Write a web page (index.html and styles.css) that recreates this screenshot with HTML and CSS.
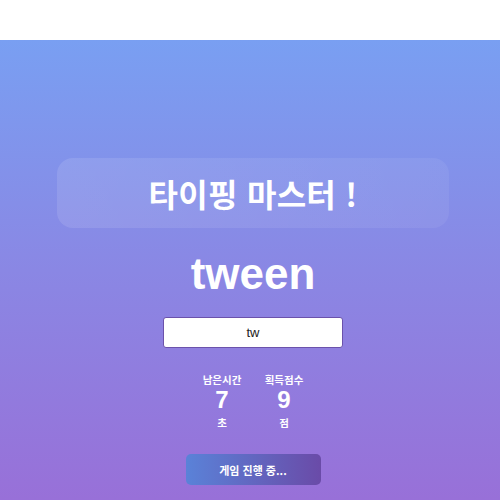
FILE: index.html
```html
<!DOCTYPE html>
<html lang="ko">
<head>
<meta charset="utf-8">
<link rel="stylesheet" href="styles.css">
</head>
<body>
<div class="topbar"></div>
<main class="stage">
  <div class="title-box"><h1 class="title">타이핑 마스터 !</h1></div>
  <div class="word">tween</div>
  <div class="input-box">tw</div>
  <div class="stats">
    <div class="stat">
      <div class="stat-label">남은시간</div>
      <div class="stat-value">7</div>
      <div class="stat-unit">초</div>
    </div>
    <div class="stat">
      <div class="stat-label">획득점수</div>
      <div class="stat-value">9</div>
      <div class="stat-unit">점</div>
    </div>
  </div>
  <button class="play-btn">게임 진행 중...</button>
</main>
</body>
</html>
```
FILE: styles.css
```css
html, body {
  margin: 0;
  padding: 0;
  height: 100%;
  background: #fff;
}
body {
  font-family: "Noto Sans CJK KR", "Liberation Sans", sans-serif;
  overflow: hidden;
}
.topbar {
  height: 40px;
  background: #fff;
}
.stage {
  height: 460px;
  background: linear-gradient(180deg, #799ff2 0%, #8a87e4 50%, #9870d8 100%);
  display: flex;
  flex-direction: column;
  align-items: center;
  padding-left: 6px;
  box-sizing: border-box;
}
.title-box {
  margin-top: 118px;
  width: 392px;
  height: 70px;
  border-radius: 16px;
  background: linear-gradient(100deg, rgba(255, 255, 255, 0.11), rgba(255, 255, 255, 0.06));
  display: flex;
  align-items: center;
  justify-content: center;
}
.title {
  margin: 0;
  color: #fff;
  font-size: 32px;
  font-weight: 700;
  letter-spacing: 0.3px;
}
.word {
  margin-top: 20px;
  color: #fff;
  font-family: "Liberation Sans", sans-serif;
  font-weight: 700;
  font-size: 44px;
  line-height: 52px;
}
.input-box {
  margin-top: 17px;
  width: 180px;
  height: 31px;
  box-sizing: border-box;
  border: 1px solid #6b52ab;
  border-radius: 3px;
  background: #fff;
  color: #222;
  font-family: "Liberation Sans", sans-serif;
  font-size: 13px;
  display: flex;
  align-items: center;
  justify-content: center;
}
.stats {
  margin-top: 24px;
  display: flex;
  gap: 20px;
}
.stat {
  width: 42px;
  display: flex;
  flex-direction: column;
  align-items: center;
  color: #fff;
  font-weight: 700;
}
.stat-label {
  font-size: 10.5px;
  line-height: 16px;
}
.stat-value {
  font-family: "Liberation Sans", sans-serif;
  font-size: 24px;
  line-height: 24px;
}
.stat-unit {
  font-size: 10.5px;
  line-height: 18px;
  margin-top: 2px;
}
.play-btn {
  margin-top: 22px;
  width: 135px;
  height: 31px;
  border: none;
  border-radius: 5px;
  background: linear-gradient(90deg, #5a82d8 0%, #6a4ba8 100%);
  color: #fff;
  font-family: "Noto Sans CJK KR", sans-serif;
  font-weight: 700;
  font-size: 11px;
  padding: 0;
}
```
